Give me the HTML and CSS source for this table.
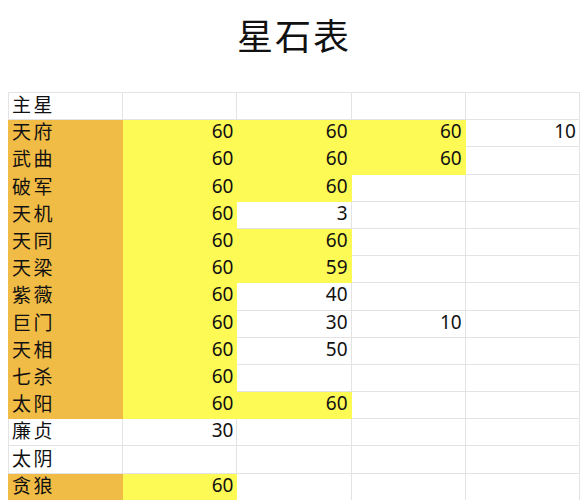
FILE: index.html
```html
<!DOCTYPE html>
<html lang="zh">
<head>
<meta charset="utf-8">
<title>星石表</title>
<link rel="stylesheet" href="styles.css">
</head>
<body>
<h1 class="title">星石表</h1>
<table class="sheet">
<tbody>
<tr><td class="name">主星</td><td></td><td></td><td></td><td></td></tr>
<tr><td class="name o">天府</td><td class="y">60</td><td class="y">60</td><td class="y">60</td><td>10</td></tr>
<tr><td class="name o">武曲</td><td class="y">60</td><td class="y">60</td><td class="y">60</td><td></td></tr>
<tr><td class="name o">破军</td><td class="y">60</td><td class="y">60</td><td></td><td></td></tr>
<tr><td class="name o">天机</td><td class="y">60</td><td>3</td><td></td><td></td></tr>
<tr><td class="name o">天同</td><td class="y">60</td><td class="y">60</td><td></td><td></td></tr>
<tr><td class="name o">天梁</td><td class="y">60</td><td class="y">59</td><td></td><td></td></tr>
<tr><td class="name o">紫薇</td><td class="y">60</td><td>40</td><td></td><td></td></tr>
<tr><td class="name o">巨门</td><td class="y">60</td><td>30</td><td>10</td><td></td></tr>
<tr><td class="name o">天相</td><td class="y">60</td><td>50</td><td></td><td></td></tr>
<tr><td class="name o">七杀</td><td class="y">60</td><td></td><td></td><td></td></tr>
<tr><td class="name o">太阳</td><td class="y">60</td><td class="y">60</td><td></td><td></td></tr>
<tr><td class="name">廉贞</td><td>30</td><td></td><td></td><td></td></tr>
<tr><td class="name">太阴</td><td></td><td></td><td></td><td></td></tr>
<tr><td class="name o">贪狼</td><td class="y">60</td><td></td><td></td><td></td></tr>
</tbody>
</table>
</body>
</html>
```
FILE: styles.css
```css
html, body {
  background: #ffffff;
}
body {
  margin: 0;
  padding: 0 8px;
  font-family: "Noto Sans", "Noto Sans CJK SC", sans-serif;
  color: #111111;
}
.title {
  margin: 0;
  padding-top: 10px;
  height: 80px;
  box-sizing: border-box;
  text-align: center;
  font-family: "Noto Sans CJK SC", sans-serif;
  font-weight: 400;
  font-size: 36px;
  letter-spacing: 2px;
  line-height: 48px;
}
.sheet {
  margin-top: 12px;
  border-collapse: collapse;
  table-layout: fixed;
  width: 571px;
}
.sheet tr {
  height: 27.2px;
}
.sheet td {
  width: 114.2px;
  border: 1px solid #e3e3e3;
  padding: 0 3px 4px 3px;
  font-size: 19px;
  line-height: 22px;
  text-align: right;
  vertical-align: middle;
  box-sizing: border-box;
  white-space: nowrap;
}
.sheet td.name {
  text-align: left;
  font-family: "Noto Sans CJK SC", sans-serif;
  font-weight: 400;
  letter-spacing: 2.5px;
}
.sheet td.o {
  background: #f1bc45;
  border-color: #f1bc45;
}
.sheet td.y {
  background: #fefa55;
  border-color: #fefa55;
}
```
